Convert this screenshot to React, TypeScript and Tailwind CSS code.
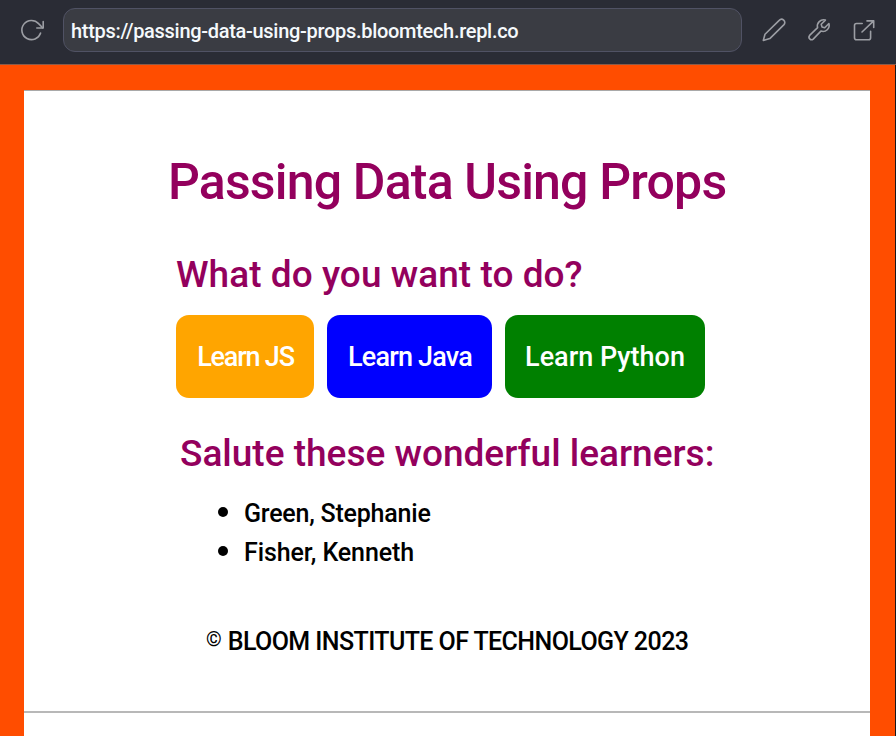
import type { ReactNode } from "react";

function Icon({ children, className = "" }: { children: ReactNode; className?: string }) {
  return (
    <svg
      viewBox="0 0 24 24"
      fill="none"
      stroke="#9c9ea4"
      strokeWidth="1.6"
      strokeLinecap="round"
      strokeLinejoin="round"
      className={`size-6 shrink-0 ${className}`}
    >
      {children}
    </svg>
  );
}

function AddressBar() {
  return (
    <header className="flex h-[65px] items-start border-b border-[#8a5a48] bg-[#2a2c35] pt-2 pl-5">
      <Icon className="mt-[10px]">
        <path d="M20.6 15A9.6 9.6 0 1 1 18.6 5.6L22.6 9.8" />
        <path d="M23.2 3.6V10H16.8" />
      </Icon>
      <div className="ml-[19px] flex h-11 w-[679px] items-center rounded-[12px] border border-[#505264] bg-[#3a3c43] pt-0.5 pl-[7px]">
        <span className="text-[20px] leading-6 font-medium tracking-[-0.3px] whitespace-nowrap text-[#f5f9fc]">
          https://passing-data-using-props.bloomtech.repl.co
        </span>
      </div>
      <Icon className="mt-[10px] ml-5">
        <path d="M1.3 22.4L3 16.2L17.2 2.4A3.1 3.1 0 0 1 22 6.6L7.8 20.6Z" />
      </Icon>
      <Icon className="mt-[10px] ml-[21px]">
        <path d="M18.4 2.1L14.2 6.3L15 9L17.7 9.7L21.9 5.5A6.2 6.2 0 0 1 13.9 13.1L6.2 21.1A2.6 2.6 0 0 1 2.6 17.4L10.6 9.7A6.2 6.2 0 0 1 18.4 2.1Z" />
      </Icon>
      <Icon className="mt-[10px] ml-5">
        <path d="M11.2 5.5H5.5A2 2 0 0 0 3.5 7.5V19.8A2 2 0 0 0 5.5 21.8H17.6A2 2 0 0 0 19.6 19.8V13.3" />
        <path d="M11 14L22.7 2.9M16 2.9H22.7V9.4" />
      </Icon>
    </header>
  );
}

function Learner({ name, tracking }: { name: string; tracking: string }) {
  return (
    <li className="flex h-[39px] items-center">
      <span className="mr-4 -mt-1 size-[10px] rounded-full bg-black" />
      <span className={tracking}>{name}</span>
    </li>
  );
}

export default function App() {
  return (
    <div className="flex h-[736px] w-[896px] flex-col overflow-hidden bg-[#2a2c35] font-['Roboto',sans-serif]">
      <AddressBar />
      <main className="flex flex-1 border-r border-[#17181c] bg-[#ff4d00] pt-[25px] pl-6">
        <div className="w-[846px] border-t border-[#a9a9a9] bg-white font-medium whitespace-nowrap">
          <section className="h-[622px] border-b-2 border-[#b8b8b8] pt-[61px] text-[#93005d]">
            <h1 className="ml-[144px] text-[50px] leading-[60px] tracking-[-0.82px]">Passing Data Using Props</h1>
            <h2 className="mt-[43px] ml-[152px] text-[37px] leading-10 tracking-[0.04px]">What do you want to do?</h2>
            <div className="mt-5 ml-[152px] flex h-[83px] gap-[13px] text-[27px] text-white">
              <button className="w-[138px] rounded-[13px] bg-[#ffa500] pt-0.5 pl-px tracking-[-1.2px]">Learn JS</button>
              <button className="w-[165px] rounded-[13px] bg-[#0000ff] pt-0.5 pl-px tracking-[-0.8px]">Learn Java</button>
              <button className="w-[200px] rounded-[13px] bg-[#008000] pt-0.5 tracking-[0px]">Learn Python</button>
            </div>
            <h2 className="mt-9 ml-[156px] text-[37px] leading-10 tracking-[0px]">Salute these wonderful learners:</h2>
            <ul className="mt-5 ml-[194px] text-[25px] text-black">
              <Learner name="Green, Stephanie" tracking="tracking-[-0.22px]" />
              <Learner name="Fisher, Kenneth" tracking="tracking-[-0.1px]" />
            </ul>
            <footer className="mt-[50px] ml-[182px] flex h-10 items-center text-black">
              <span className="-mt-1.5 mr-[6px] text-[20px]">©</span>
              <span className="text-[25px] tracking-[-0.58px]">BLOOM INSTITUTE OF TECHNOLOGY 2023</span>
            </footer>
          </section>
        </div>
      </main>
    </div>
  );
}
